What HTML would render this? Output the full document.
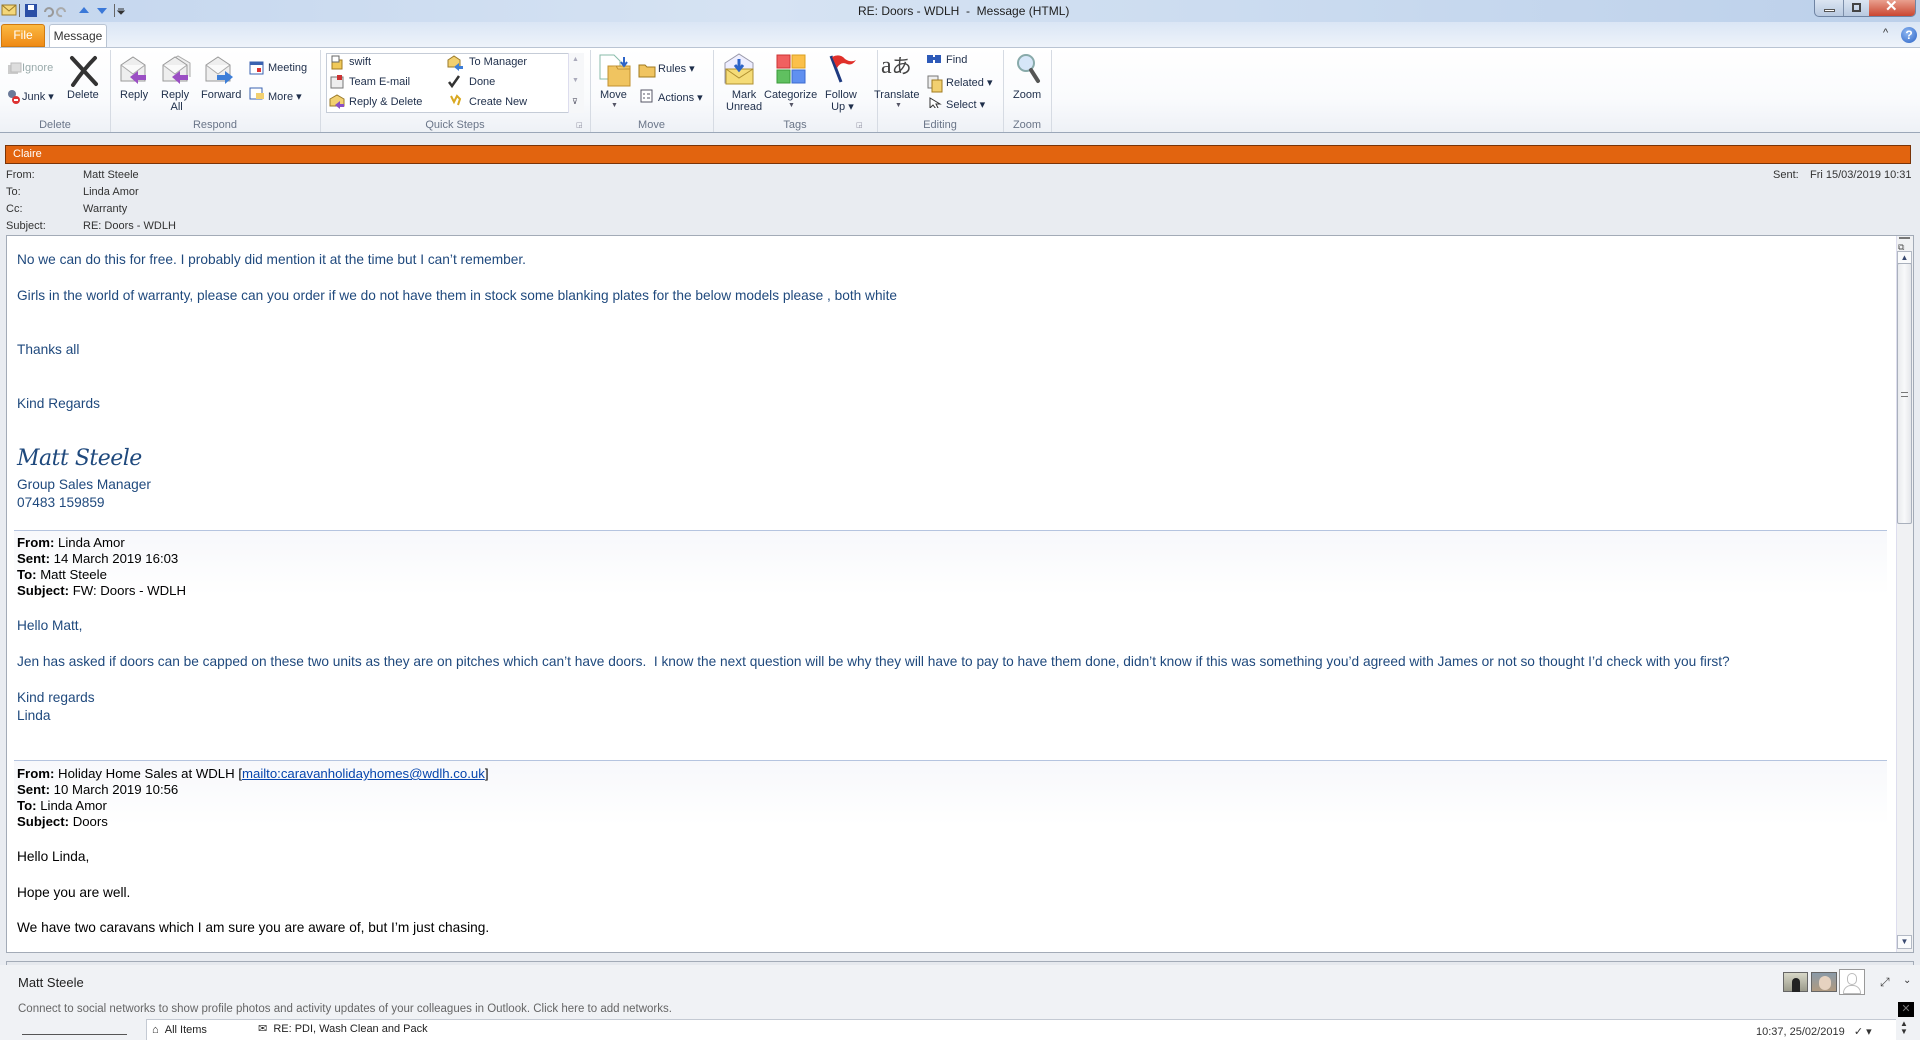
<!DOCTYPE html>
<html><head><meta charset="utf-8">
<style>
*{margin:0;padding:0;box-sizing:border-box}
body{width:1920px;height:1040px;overflow:hidden;background:#e9ecf1;font-family:"Liberation Sans",sans-serif;position:relative;color:#1e1e1e}
.a{position:absolute;white-space:nowrap}
.rb{font-size:11px;color:#1e2e4a}
.gl{font-size:11px;color:#6a7588;top:119px;text-align:center}
.sep{position:absolute;top:50px;width:1px;height:82px;background:#d6dbe3}
.h{font-size:11px;color:#333}
.bt{font-size:13.7px;color:#1f497d;left:17px}
.bk{font-size:13.7px;color:#000;left:17px}
.ic{position:absolute}
</style></head><body>
<div class="a" style="left:0;top:0;width:1920px;height:47px;background:linear-gradient(#c9daf0,#dfe9f6 60%,#eef3fa)"></div>
<div class="a" style="left:0;top:0;width:1920px;height:22px;background:linear-gradient(90deg,#c4d6ee,#d6e3f3 40%,#c9daef 70%,#bcd0ea)"></div>
<svg class="ic" style="left:1px;top:3px" width="150" height="16">
<rect x="1" y="2" width="14" height="10" fill="#f4d77a" stroke="#9a7a2a"/><path d="M1 2l7 6 7-6" stroke="#9a7a2a" fill="none"/>
<rect x="18" y="1" width="1" height="13" fill="#666"/>
<rect x="24" y="1" width="12" height="13" fill="#2b4fa6"/><rect x="27" y="2" width="6" height="5" fill="#fff"/>
<path d="M44 9a4 4 0 1 1 3 4" stroke="#999" stroke-width="2" fill="none"/>
<path d="M64 9a4 4 0 1 0 -3 4" stroke="#aaa" stroke-width="2" fill="none"/>
<path d="M78 10l5-6 5 6z" fill="#3a78d8"/><path d="M96 5l5 6 5-6z" fill="#3a78d8"/>
<rect x="113" y="1" width="1" height="13" fill="#666"/><path d="M117 6h6M117 8l3 3 3-3z" stroke="#333" fill="#333"/>
</svg>
<div class="a" style="left:858px;top:4px;font-size:12px;color:#1e1e1e">RE: Doors - WDLH &nbsp;- &nbsp;Message (HTML)</div>
<div class="a" style="left:1814px;top:0;width:102px;height:17px;border:1px solid #6f84a3;border-top:none;border-radius:0 0 5px 5px;background:linear-gradient(#dbe5f2,#b8c9e0);overflow:hidden">
<div class="a" style="left:28px;top:0;width:1px;height:17px;background:#7d8faa"></div>
<div class="a" style="left:54px;top:0;width:47px;height:17px;background:linear-gradient(#e9a08f,#c8402a)"></div>
<div class="a" style="left:9px;top:9px;width:11px;height:3px;background:#fff;border:1px solid #555"></div>
<div class="a" style="left:37px;top:3px;width:9px;height:9px;border:2px solid #444"></div>
<div class="a" style="left:70px;top:-3px;color:#fff;font-size:15px;font-weight:bold">✕</div>
</div>
<div class="a" style="left:1883px;top:27px;font-size:11px;color:#333">^</div>
<div class="a" style="left:1901px;top:27px;width:16px;height:16px;border-radius:50%;background:radial-gradient(circle at 40% 35%,#8fb8f2,#2b63c6);color:#fff;font-size:12px;font-weight:bold;text-align:center;line-height:16px">?</div>
<div class="a" style="left:1px;top:24px;width:44px;height:23px;background:linear-gradient(#fbb941,#ef8a16);border:1px solid #d07a10;border-radius:3px 3px 0 0;color:#fff;font-size:12px;text-align:center;line-height:21px">File</div>
<div class="a" style="left:49px;top:24px;width:58px;height:24px;background:#fff;border:1px solid #b9c4d3;border-bottom:none;border-radius:3px 3px 0 0;color:#333;font-size:12px;text-align:center;line-height:22px">Message</div>
<div class="a" style="left:0;top:47px;width:1920px;height:86px;background:linear-gradient(#fff,#fafbfd 60%,#eef1f6);border-top:1px solid #b9c4d3;border-bottom:1px solid #9ba7b8"></div>
<div class="sep" style="left:110px"></div><div class="sep" style="left:320px"></div><div class="sep" style="left:590px"></div><div class="sep" style="left:713px"></div><div class="sep" style="left:877px"></div><div class="sep" style="left:1003px"></div><div class="sep" style="left:1051px"></div>
<svg class="ic" style="left:6px;top:61px" width="16" height="16"><rect x="2" y="4" width="10" height="9" fill="#ccc"/><rect x="5" y="2" width="10" height="9" fill="#ddd" stroke="#bbb"/></svg>
<div class="a rb" style="left:22px;top:62px;color:#9aa">Ignore</div>
<svg class="ic" style="left:6px;top:89px" width="16" height="16"><circle cx="6" cy="5" r="4" fill="#6b7a99"/><circle cx="10" cy="11" r="4" fill="#d33"/><path d="M8 11h4" stroke="#fff" stroke-width="2"/></svg>
<div class="a rb" style="left:22px;top:90px">Junk ▾</div>
<svg class="ic" style="left:68px;top:55px" width="32" height="32"><path d="M4 3L28 29M27 3Q16 14 5 30" stroke="#333" stroke-width="4" fill="none" stroke-linecap="round"/></svg>
<div class="a rb" style="left:67px;top:89px">Delete</div>
<div class="a gl" style="left:0;width:110px">Delete</div>
<svg class="ic" style="left:118px;top:55px" width="190" height="36">
<g><path d="M3 10l12-8 12 8v16H3z" fill="#eee" stroke="#999"/><path d="M3 10l12 9 12-9" fill="#fafafa" stroke="#aaa"/><path d="M12 22l8-6v4h8v5h-8v4z" fill="#9b4fc4"/></g>
<g transform="translate(42,0)"><path d="M6 8l12-7 12 7v14" fill="#eee" stroke="#aaa"/><path d="M3 10l12-8 12 8v16H3z" fill="#eee" stroke="#999"/><path d="M3 10l12 9 12-9" fill="#fafafa" stroke="#aaa"/><path d="M12 22l8-6v4h8v5h-8v4z" fill="#9b4fc4"/></g>
<g transform="translate(85,0)"><path d="M3 10l12-8 12 8v16H3z" fill="#eee" stroke="#999"/><path d="M3 10l12 9 12-9" fill="#fafafa" stroke="#aaa"/><path d="M30 22l-8-6v4h-8v5h8v4z" fill="#3d7ed8"/></g>
</svg>
<div class="a rb" style="left:120px;top:89px">Reply</div>
<div class="a rb" style="left:161px;top:89px;text-align:center;line-height:12px">Reply<br>&nbsp;All</div>
<div class="a rb" style="left:201px;top:89px">Forward</div>
<svg class="ic" style="left:249px;top:60px" width="16" height="42"><rect x="1" y="2" width="13" height="12" fill="#fff" stroke="#3a62b0"/><rect x="1" y="2" width="13" height="3" fill="#3a62b0"/><rect x="8" y="8" width="4" height="4" fill="#d33"/><rect x="1" y="28" width="12" height="11" fill="#fff" stroke="#3a62b0"/><rect x="7" y="33" width="8" height="6" fill="#f2d070"/></svg>
<div class="a rb" style="left:268px;top:62px">Meeting</div>
<div class="a rb" style="left:268px;top:90px">More ▾</div>
<div class="a gl" style="left:110px;width:210px">Respond</div>
<div class="a" style="left:326px;top:53px;width:258px;height:60px;background:#fff;border:1px solid #c5ccd7"></div>
<div class="a" style="left:568px;top:53px;width:16px;height:60px;border-left:1px solid #dde;background:#f6f7f9"></div>
<div class="a" style="left:572px;top:56px;font-size:7px;color:#aab">▲</div><div class="a" style="left:572px;top:77px;font-size:7px;color:#aab">▼</div><div class="a" style="left:572px;top:97px;font-size:8px;color:#556">⊽</div>
<svg class="ic" style="left:329px;top:55px" width="240" height="58">
<rect x="3" y="5" width="10" height="9" fill="#f0c95a" stroke="#a07a20"/><rect x="3" y="1" width="7" height="6" fill="#fff" stroke="#666"/>
<rect x="2" y="22" width="12" height="11" fill="#eee" stroke="#777"/><rect x="8" y="20" width="5" height="5" fill="#c33"/>
<path d="M1 44l7-4 7 4v7H1z" fill="#f2d070" stroke="#9a7a2a"/><path d="M6 50l5-4v3h4v3h-4v2z" fill="#8b4fc4"/>
<path d="M119 5l6-4 6 4v7h-12z" fill="#f2d070" stroke="#9a7a2a"/><path d="M125 12l5-4v3h4v3h-4v2z" fill="#3d7ed8"/>
<path d="M120 27l3 4 7-10" stroke="#333" stroke-width="2.5" fill="none"/>
<path d="M122 41l3 6 3-6 3 3-2 6" stroke="#d9a820" stroke-width="2" fill="none"/>
</svg>
<div class="a rb" style="left:349px;top:56px">swift</div>
<div class="a rb" style="left:349px;top:76px">Team E-mail</div>
<div class="a rb" style="left:349px;top:96px">Reply &amp; Delete</div>
<div class="a rb" style="left:469px;top:56px">To Manager</div>
<div class="a rb" style="left:469px;top:76px">Done</div>
<div class="a rb" style="left:469px;top:96px">Create New</div>
<div class="a gl" style="left:320px;width:270px">Quick Steps</div>
<div class="a" style="left:576px;top:121px;font-size:7px;color:#889">◲</div>
<svg class="ic" style="left:598px;top:54px" width="34" height="34"><path d="M2 1h14l6 6v18H2z" fill="#fff" stroke="#8ba"/><path d="M10 12h22v20H10z" fill="#f0c460" stroke="#c09030"/><path d="M10 12h8l2 3h12" fill="#f7d88a" stroke="#c09030"/><path d="M26 3v8m-3-3l3 4 3-4" stroke="#2d64c8" stroke-width="2" fill="none"/></svg>
<div class="a rb" style="left:600px;top:89px">Move</div><div class="a" style="left:611px;top:102px;font-size:7px;color:#556">▼</div>
<svg class="ic" style="left:638px;top:61px" width="18" height="42"><path d="M1 4h6l2 2h8v10H1z" fill="#f0c460" stroke="#a07a20"/><rect x="3" y="29" width="11" height="12" fill="#fff" stroke="#556"/><path d="M5 33h2m2 0h3M5 37h2m2 0h3" stroke="#556"/></svg>
<div class="a rb" style="left:658px;top:62px">Rules ▾</div>
<div class="a rb" style="left:658px;top:91px">Actions ▾</div>
<div class="a gl" style="left:590px;width:123px">Move</div>
<svg class="ic" style="left:723px;top:53px" width="32" height="32"><path d="M2 10l14-9 14 9v20H2z" fill="#eef" stroke="#99a"/><rect x="3" y="16" width="27" height="15" fill="#f5dc78" stroke="#b09030"/><path d="M3 16l13 9 14-9" fill="none" stroke="#b09030"/><path d="M16 6v10m-4-4l4 5 4-5" stroke="#2d64c8" stroke-width="3" fill="none"/></svg>
<div class="a rb" style="left:726px;top:89px;text-align:center;line-height:12px">Mark<br>Unread</div>
<svg class="ic" style="left:776px;top:54px" width="30" height="30"><rect x="1" y="1" width="13" height="13" fill="#f06060" stroke="#c33"/><rect x="16" y="1" width="13" height="13" fill="#fbc04a" stroke="#d9a020"/><rect x="1" y="16" width="13" height="13" fill="#60c060" stroke="#3a9a3a"/><rect x="16" y="16" width="13" height="13" fill="#6090f0" stroke="#3a6ad0"/></svg>
<div class="a rb" style="left:764px;top:89px">Categorize</div><div class="a" style="left:788px;top:102px;font-size:7px;color:#556">▼</div>
<svg class="ic" style="left:828px;top:54px" width="30" height="30"><path d="M3 2l10 26" stroke="#1e3a80" stroke-width="3"/><path d="M4 3q8-4 13 2 6 4 11 1-4 6-9 4-6-3-10 4z" fill="#e0302a"/></svg>
<div class="a rb" style="left:825px;top:89px;text-align:center;line-height:12px">Follow<br>&nbsp;Up ▾</div>
<div class="a gl" style="left:713px;width:164px">Tags</div>
<div class="a" style="left:856px;top:121px;font-size:7px;color:#889">◲</div>
<div class="a" style="left:881px;top:50px;font-family:'Liberation Serif',serif;font-size:24px;color:#444">a<span style="font-family:'Noto Sans CJK JP';font-size:20px">あ</span></div>
<div class="a rb" style="left:874px;top:89px">Translate</div><div class="a" style="left:895px;top:102px;font-size:7px;color:#556">▼</div>
<svg class="ic" style="left:926px;top:52px" width="18" height="56"><rect x="1" y="3" width="6" height="8" fill="#2d5ab8"/><rect x="9" y="3" width="6" height="8" fill="#2d5ab8"/><rect x="5" y="5" width="6" height="3" fill="#2d5ab8"/><rect x="2" y="24" width="10" height="12" fill="#eee" stroke="#777"/><rect x="6" y="28" width="10" height="12" fill="#f2d070" stroke="#a07a20"/><path d="M4 46v10l3-3 3 4 2-1-2-4h4z" fill="#fff" stroke="#333"/></svg>
<div class="a rb" style="left:946px;top:54px">Find</div>
<div class="a rb" style="left:946px;top:76px">Related ▾</div>
<div class="a rb" style="left:946px;top:98px">Select ▾</div>
<div class="a gl" style="left:877px;width:126px">Editing</div>
<svg class="ic" style="left:1015px;top:52px" width="26" height="32"><circle cx="11" cy="11" r="8" fill="#d6e6f8" stroke="#8aa" stroke-width="2"/><path d="M16 18l7 11" stroke="#555" stroke-width="4" stroke-linecap="round"/></svg>
<div class="a rb" style="left:1013px;top:89px">Zoom</div>
<div class="a gl" style="left:1003px;width:48px">Zoom</div>
<div class="a" style="left:5px;top:145px;width:1906px;height:19px;background:#e2640f;border:1px solid #7a3408;color:#fff;font-size:11px;padding-left:7px;line-height:17px">Claire</div>
<div class="a h" style="left:6px;top:169px">From:</div><div class="a h" style="left:83px;top:169px">Matt Steele</div>
<div class="a h" style="left:6px;top:186px">To:</div><div class="a h" style="left:83px;top:186px">Linda Amor</div>
<div class="a h" style="left:6px;top:203px">Cc:</div><div class="a h" style="left:83px;top:203px">Warranty</div>
<div class="a h" style="left:6px;top:220px">Subject:</div><div class="a h" style="left:83px;top:220px">RE: Doors - WDLH</div>
<div class="a h" style="left:1773px;top:169px">Sent:</div><div class="a h" style="left:1810px;top:169px">Fri 15/03/2019 10:31</div>
<div class="a" style="left:6px;top:235px;width:1908px;height:718px;background:#fff;border:1px solid #a3abb7"></div>
<div class="a" style="left:1896px;top:236px;width:17px;height:716px;background:#f0f1f3;border-left:1px solid #dde"></div>
<div class="a" style="left:1899px;top:237px;width:11px;height:2px;background:#777"></div>
<div class="a" style="left:1898px;top:242px;width:14px;height:10px;font-size:9px;color:#555">⧉</div>
<div class="a" style="left:1897px;top:251px;width:15px;height:13px;border:1px solid #b3b9c4;background:#fafbfc;font-size:8px;color:#3a4a70;text-align:center;line-height:11px">▲</div>
<div class="a" style="left:1897px;top:263px;width:15px;height:261px;border:1px solid #a9b0bc;border-radius:2px;background:linear-gradient(90deg,#e9ebee,#f8f9fa,#e4e6ea)"></div>
<div class="a" style="left:1901px;top:392px;width:7px;height:5px;border-top:1px solid #777;border-bottom:1px solid #777"></div>
<div class="a" style="left:1897px;top:935px;width:15px;height:14px;border:1px solid #b3b9c4;background:#fafbfc;font-size:8px;color:#3a4a70;text-align:center;line-height:12px">▼</div>

<div class="a bt" style="top:252px">No we can do this for free. I probably did mention it at the time but I can’t remember.</div>
<div class="a bt" style="top:288px">Girls in the world of warranty, please can you order if we do not have them in stock some blanking plates for the below models please , both white</div>
<div class="a bt" style="top:342px">Thanks all</div>
<div class="a bt" style="top:396px">Kind Regards</div>
<div class="a" style="left:17px;top:446px;font-family:'DejaVu Serif',serif;font-style:italic;font-size:22px;color:#1f497d;letter-spacing:-0.5px">Matt Steele</div>
<div class="a bt" style="top:477px">Group Sales Manager</div>
<div class="a bt" style="top:495px">07483 159859</div>
<div class="a" style="left:14px;top:530px;width:1873px;height:1px;background:#b5c4df"></div>
<div class="a" style="left:14px;top:531px;width:1873px;height:64px;background:linear-gradient(#f7f8fb,#fff)"></div>
<div class="a bk" style="top:535px;font-size:13.2px;line-height:16px"><b>From:</b> Linda Amor<br><b>Sent:</b> 14 March 2019 16:03<br><b>To:</b> Matt Steele<br><b>Subject:</b> FW: Doors - WDLH</div>
<div class="a bt" style="top:618px">Hello Matt,</div>
<div class="a bt" style="top:654px">Jen has asked if doors can be capped on these two units as they are on pitches which can’t have doors.&nbsp; I know the next question will be why they will have to pay to have them done, didn’t know if this was something you’d agreed with James or not so thought I’d check with you first?</div>
<div class="a bt" style="top:690px">Kind regards</div>
<div class="a bt" style="top:708px">Linda</div>
<div class="a" style="left:14px;top:760px;width:1873px;height:1px;background:#b5c4df"></div>
<div class="a" style="left:14px;top:761px;width:1873px;height:64px;background:linear-gradient(#f7f8fb,#fff)"></div>
<div class="a bk" style="top:766px;font-size:13.2px;line-height:16px"><b>From:</b> Holiday Home Sales at WDLH [<span style="color:#0645ad;text-decoration:underline">mailto:caravanholidayhomes@wdlh.co.uk</span>]<br><b>Sent:</b> 10 March 2019 10:56<br><b>To:</b> Linda Amor<br><b>Subject:</b> Doors</div>
<div class="a bk" style="top:849px">Hello Linda,</div>
<div class="a bk" style="top:885px">Hope you are well.</div>
<div class="a bk" style="top:920px">We have two caravans which I am sure you are aware of, but I’m just chasing.</div>
<div class="a" style="left:6px;top:961px;width:1908px;height:4px;border:1px solid #a3abb7;border-bottom:none;background:#e6e9ee"></div>
<div class="a" style="left:0;top:965px;width:1920px;height:55px;background:#f0f2f5"></div>
<div class="a" style="left:18px;top:975px;font-size:13px;color:#222">Matt Steele</div>
<div class="a" style="left:18px;top:1003px;font-size:11.5px;color:#666">Connect to social networks to show profile photos and activity updates of your colleagues in Outlook. Click here to add networks.</div>
<div class="a" style="left:1783px;top:972px;width:25px;height:20px;background:linear-gradient(#d8d8c8,#9a9a8a);border:1px solid #666"><div class="a" style="left:8px;top:5px;width:8px;height:14px;background:#222;border-radius:4px 4px 0 0"></div></div>
<div class="a" style="left:1811px;top:972px;width:26px;height:20px;background:linear-gradient(#8a9aa8,#b09a80);border:1px solid #666"><div class="a" style="left:7px;top:3px;width:12px;height:14px;background:#e6d2c0;border-radius:6px"></div></div>
<div class="a" style="left:1839px;top:969px;width:26px;height:26px;background:#fff;border:1px solid #999"><div class="a" style="left:7px;top:3px;width:10px;height:12px;border:1px solid #bbb;border-radius:5px"></div><div class="a" style="left:3px;top:15px;width:18px;height:9px;border:1px solid #bbb;border-radius:8px 8px 0 0"></div></div>
<div class="a" style="left:1880px;top:975px;font-size:12px;color:#444">⤢</div>
<div class="a" style="left:1903px;top:975px;font-size:10px;color:#333">⌄</div>
<div class="a" style="left:1898px;top:1002px;width:16px;height:15px;background:#000;color:#777;font-size:11px;text-align:center;line-height:15px">✕</div>
<div class="a" style="left:0;top:1019px;width:1920px;height:21px;background:#f0f2f5"></div>
<div class="a" style="left:146px;top:1019px;width:1750px;height:21px;background:#fff;border:1px solid #c4cad3;border-right:none;border-bottom:none"></div>
<div class="a" style="left:22px;top:1034px;width:105px;height:1px;background:#555"></div>
<div class="a" style="left:152px;top:1024px;font-size:11px;color:#222">⌂ &nbsp;All Items</div>
<div class="a" style="left:258px;top:1022px;font-size:11px;color:#222">✉ &nbsp;RE: PDI, Wash Clean and Pack</div>
<div class="a" style="left:1756px;top:1025px;font-size:11px;color:#333">10:37, 25/02/2019 &nbsp; ✓ ▾</div>
<div class="a" style="left:1900px;top:1020px;font-size:8px;color:#333;line-height:8px">▲<br>▼</div>
</body></html>
